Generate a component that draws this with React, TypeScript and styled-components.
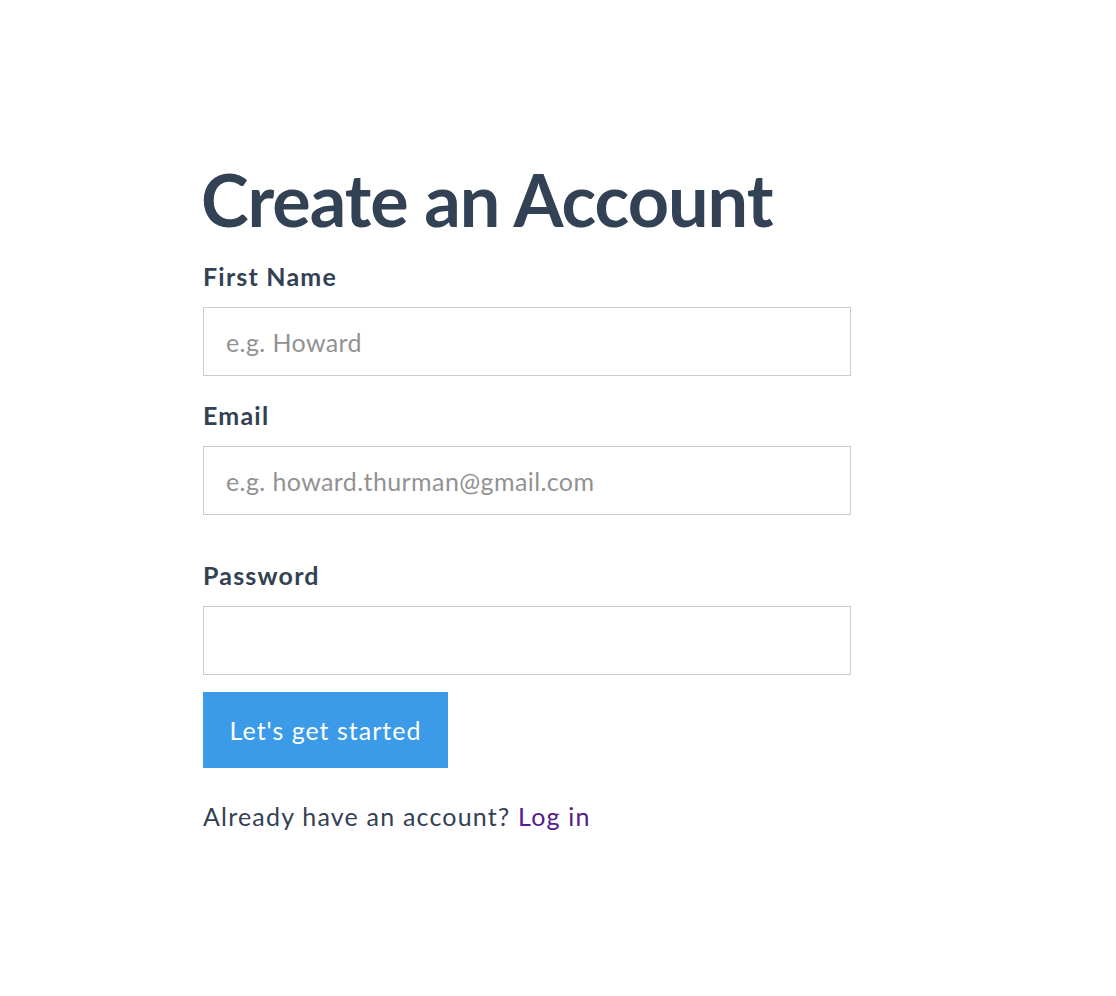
import styled, { createGlobalStyle } from "styled-components";

const GlobalStyle = createGlobalStyle`
    body {
        margin: 0;
        background: #ffffff;
        font-family: Lato, "Open Sans", sans-serif;
        color: #334155;
    }
`;

const Page = styled.main`
    padding: 156px 0 0 203px;
`;

const Form = styled.form`
    display: flex;
    flex-direction: column;
    width: 648px;
`;

const Title = styled.h1`
    margin: 0 0 18px -2px;
    font-size: 72px;
    font-weight: 700;
    line-height: 86px;
    letter-spacing: -1px;
    color: #334155;
`;

const Field = styled.div<{ $gap?: number }>`
    display: flex;
    flex-direction: column;
    margin-top: ${({ $gap }) => $gap ?? 0}px;
`;

const Label = styled.label`
    font-size: 25px;
    font-weight: 700;
    line-height: 32px;
    letter-spacing: 1.2px;
    margin-bottom: 15px;
`;

const Input = styled.input`
    box-sizing: border-box;
    height: 69px;
    padding: 0 22px;
    border: 1px solid #cccccc;
    border-radius: 0;
    font-family: inherit;
    font-size: 25px;
    letter-spacing: 0.4px;
    color: #334155;
    outline: none;

    &::placeholder {
        color: #929292;
    }
`;

const Button = styled.button`
    align-self: flex-start;
    margin-top: 17px;
    width: 245px;
    height: 76px;
    border: none;
    background: #3b9be9;
    color: #ffffff;
    font-family: inherit;
    font-size: 25px;
    letter-spacing: 1px;
    cursor: pointer;
`;

const Footer = styled.p`
    margin: 32px 0 0;
    font-size: 25px;
    line-height: 32px;
    letter-spacing: 1.2px;

    a {
        color: #551a8b;
        text-decoration: none;
    }
`;

export default function App() {
    return (
        <>
            <GlobalStyle />
            <Page>
                <Form onSubmit={(e) => e.preventDefault()}>
                    <Title>Create an Account</Title>
                    <Field>
                        <Label htmlFor="first-name">First Name</Label>
                        <Input id="first-name" placeholder="e.g. Howard" />
                    </Field>
                    <Field $gap={23}>
                        <Label htmlFor="email">Email</Label>
                        <Input id="email" type="email" placeholder="e.g. howard.thurman@gmail.com" />
                    </Field>
                    <Field $gap={44}>
                        <Label htmlFor="password">Password</Label>
                        <Input id="password" type="password" />
                    </Field>
                    <Button type="submit">Let's get started</Button>
                    <Footer>
                        Already have an account? <a href="#login">Log in</a>
                    </Footer>
                </Form>
            </Page>
        </>
    );
}
